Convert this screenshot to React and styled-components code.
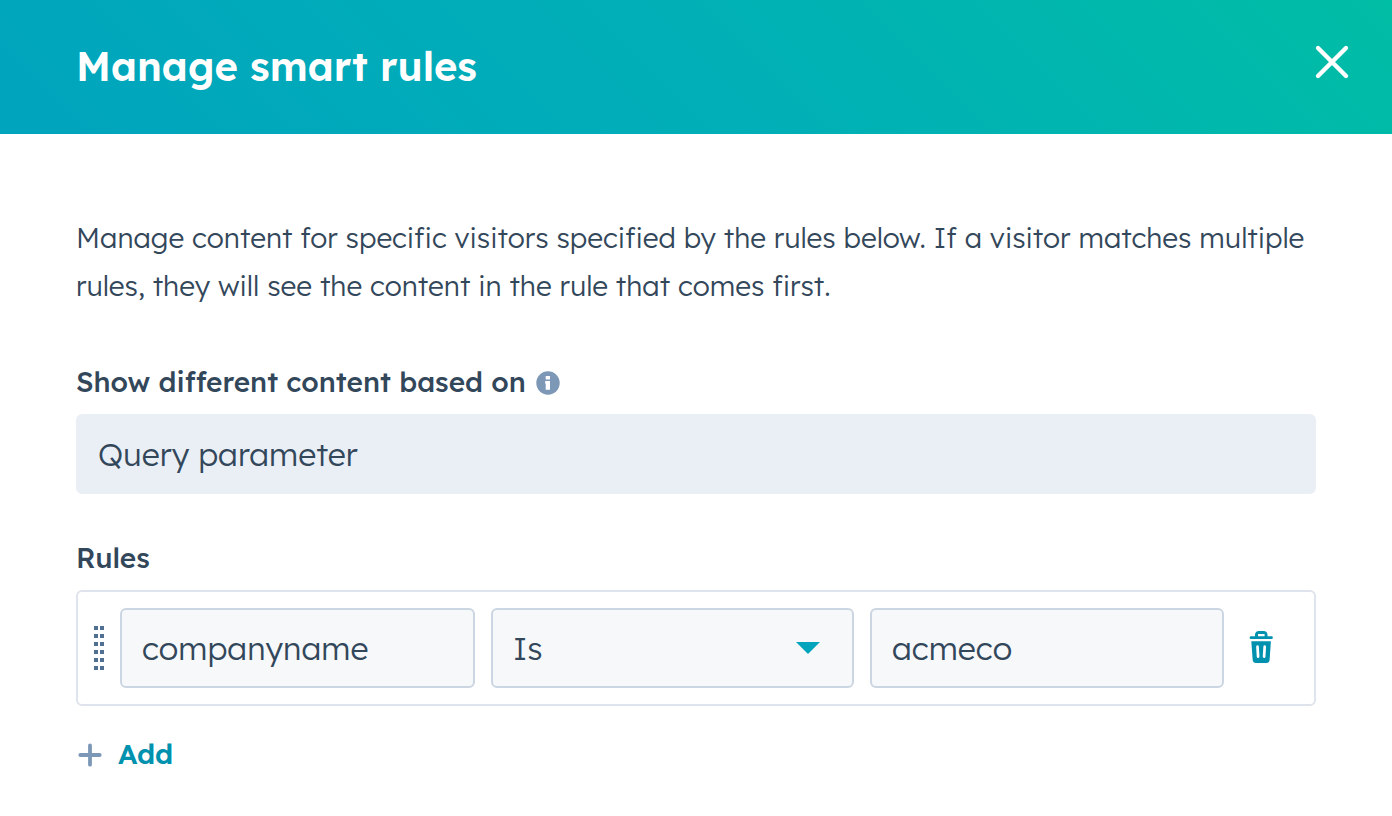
import React, { useState } from 'react';
import styled, { createGlobalStyle } from 'styled-components';

const GlobalStyle = createGlobalStyle`
    * {
        box-sizing: border-box;
    }

    body {
        margin: 0;
        background-color: #ffffff;
        color: #33475b;
        font-family: Lexend, Inter, "Liberation Sans", sans-serif;
    }

    button, input, select {
        margin: 0;
        font-family: inherit;
    }
`

const Header = styled.header`
    display: flex;
    align-items: center;
    justify-content: space-between;
    height: 134px;
    padding: 0 40px 2px 76px;
    background: linear-gradient(45deg, #00a4bd, #00afb7 50%, #00bda5);
`

const Title = styled.h1`
    margin: 0;
    color: #ffffff;
    font-size: 40px;
    font-weight: 600;
    line-height: 48px;
`

const IconButton = styled.button`
    display: flex;
    padding: 0;
    border: none;
    background: none;
    color: ${({ $color }) => $color};
    cursor: pointer;
`

const CloseButton = styled(IconButton)`
    padding-bottom: 8px;
`

const DeleteButton = styled(IconButton)`
    padding: 0 8px 2px;
`

const Content = styled.main`
    padding: 80px 76px 32px;
`

const Description = styled.p`
    margin: 0 0 48px;
    font-size: 28px;
    font-weight: 300;
    line-height: 48px;
`

const LabelRow = styled.div`
    display: flex;
    align-items: center;
    gap: 10px;
    margin-bottom: 8px;
    font-size: 28px;
    font-weight: 500;
    line-height: 48px;
`

const Input = styled.input`
    display: block;
    width: 100%;
    min-width: 0;
    height: 80px;
    padding: 0 20px;
    border: 2px solid ${({ $filled }) => $filled ? '#eaeff6' : '#cbd6e2'};
    border-radius: 6px;
    background-color: ${({ $filled }) => $filled ? '#eaeff6' : '#f6f8fa'};
    color: #33475b;
    font-size: 32px;
    font-weight: 300;
`

const Rules = styled.section`
    margin-top: 40px;
`

const Rule = styled.div`
    display: grid;
    grid-template-columns: 10px 355fr 363fr 354fr 58px;
    align-items: center;
    gap: 16px;
    padding: 16px;
    border: 2px solid #dfe3eb;
    border-radius: 6px;
`

const SelectBox = styled.div`
    display: grid;
    align-items: center;

    & > * {
        grid-area: 1 / 1;
    }

    & > svg {
        justify-self: end;
        margin-right: 34px;
        pointer-events: none;
    }
`

const Select = styled(Input)`
    appearance: none;
    cursor: pointer;
`

const AddButton = styled.button`
    display: flex;
    align-items: center;
    gap: 16px;
    margin-top: 24px;
    padding: 0 2px;
    border: none;
    background: none;
    color: #0091ae;
    font-size: 28px;
    font-weight: 600;
    line-height: 48px;
    cursor: pointer;
`

function CloseIcon() {
    return (
        <svg width="40" height="40" viewBox="0 0 40 40" fill="none" stroke="currentColor" strokeWidth="4.4" strokeLinecap="round" aria-hidden="true">
            <path d="M6 6l28 28M34 6L6 34" />
        </svg>
    )
}

function InfoIcon() {
    return (
        <svg width="24" height="26" viewBox="0 0 24 26" role="img" aria-label="Info">
            <circle cx="12" cy="14" r="11.7" fill="#7c98b6" />
            <path d="M9.700 7h4.300v3.400H9.700zM9.200 12h4.800v8.800H9.700v-6H9.200z" fill="#ffffff" />
        </svg>
    )
}

function DragIcon() {
    return (
        <svg width="10" height="44" viewBox="0 0 10 44" fill="#516f90" aria-hidden="true">
            {[0, 8, 16, 24, 32, 40].map(y => (
                <path key={y} d={`M0 ${y}h4v4h-4zM6 ${y}h4v4h-4z`} />
            ))}
        </svg>
    )
}

function CaretIcon() {
    return (
        <svg width="24" height="12" viewBox="0 0 24 12" aria-hidden="true">
            <path d="M0 0h24L12 12z" fill="#00a4bd" />
        </svg>
    )
}

function TrashIcon() {
    return (
        <svg width="26" height="32" viewBox="0 0 26 32" fill="currentColor" aria-hidden="true">
            <path d="M7 5.300V4C7 1.500 8.500 0 11 0h4.500C18 0 19.500 1.500 19.500 4v1.300h4a1.350 1.350 0 0 1 0 2.700H3a1.350 1.350 0 0 1 0-2.700zM10 5.300h6.600V3H10z" fillRule="evenodd" />
            <path d="M3.300 10.300h19.600L21.600 29c-.2 1.900-1.300 3-3.200 3H7.900C6 32 4.900 30.900 4.700 29z" />
            <path d="M9.500 15.700l.6 10M16.700 15.700l-.6 10" fill="none" stroke="#ffffff" strokeWidth="2.700" strokeLinecap="round" />
        </svg>
    )
}

function PlusIcon() {
    return (
        <svg width="24" height="26" viewBox="0 0 24 26" fill="none" stroke="#7c98b6" strokeWidth="3.800" strokeLinecap="round" aria-hidden="true">
            <path d="M12 4.300v19.400M2.300 14h19.400" />
        </svg>
    )
}

function App() {

    const [rules, setRules] = useState([
        { id: 1, param: 'companyname', operator: 'Is', value: 'acmeco' }
    ])

    function updateRule(id, field, value) {
        setRules(rules.map(rule => rule.id === id ? { ...rule, [field]: value } : rule))
    }

    function addRule() {
        setRules([...rules, { id: Date.now(), param: '', operator: 'Is', value: '' }])
    }

    return (
        <>
            <GlobalStyle />

            <Header>
                <Title>Manage smart rules</Title>
                <CloseButton type="button" $color="#ffffff" aria-label="Close">
                    <CloseIcon />
                </CloseButton>
            </Header>

            <Content>
                <Description>
                    Manage content for specific visitors specified by the rules below. If a visitor matches multiple rules, they will see the content in the rule that comes first.
                </Description>

                <LabelRow>
                    <label htmlFor="based-on">Show different content based on</label>
                    <InfoIcon />
                </LabelRow>
                <Input id="based-on" type="text" value="Query parameter" readOnly $filled />

                <Rules aria-labelledby="rules-label">
                    <LabelRow id="rules-label">Rules</LabelRow>

                    {rules.map(rule => (
                        <Rule key={rule.id}>
                            <DragIcon />
                            <Input
                                type="text"
                                aria-label="Parameter name"
                                value={rule.param}
                                onChange={e => updateRule(rule.id, 'param', e.target.value)}
                            />
                            <SelectBox>
                                <Select
                                    as="select"
                                    aria-label="Operator"
                                    value={rule.operator}
                                    onChange={e => updateRule(rule.id, 'operator', e.target.value)}
                                >
                                    <option>Is</option>
                                    <option>Contains</option>
                                </Select>
                                <CaretIcon />
                            </SelectBox>
                            <Input
                                type="text"
                                aria-label="Parameter value"
                                value={rule.value}
                                onChange={e => updateRule(rule.id, 'value', e.target.value)}
                            />
                            <DeleteButton
                                type="button"
                                $color="#0091ae"
                                aria-label="Delete rule"
                                onClick={() => setRules(rules.filter(r => r.id !== rule.id))}
                            >
                                <TrashIcon />
                            </DeleteButton>
                        </Rule>
                    ))}

                    <AddButton type="button" onClick={addRule}>
                        <PlusIcon />
                        Add
                    </AddButton>
                </Rules>
            </Content>
        </>
    )
}

export default App;
